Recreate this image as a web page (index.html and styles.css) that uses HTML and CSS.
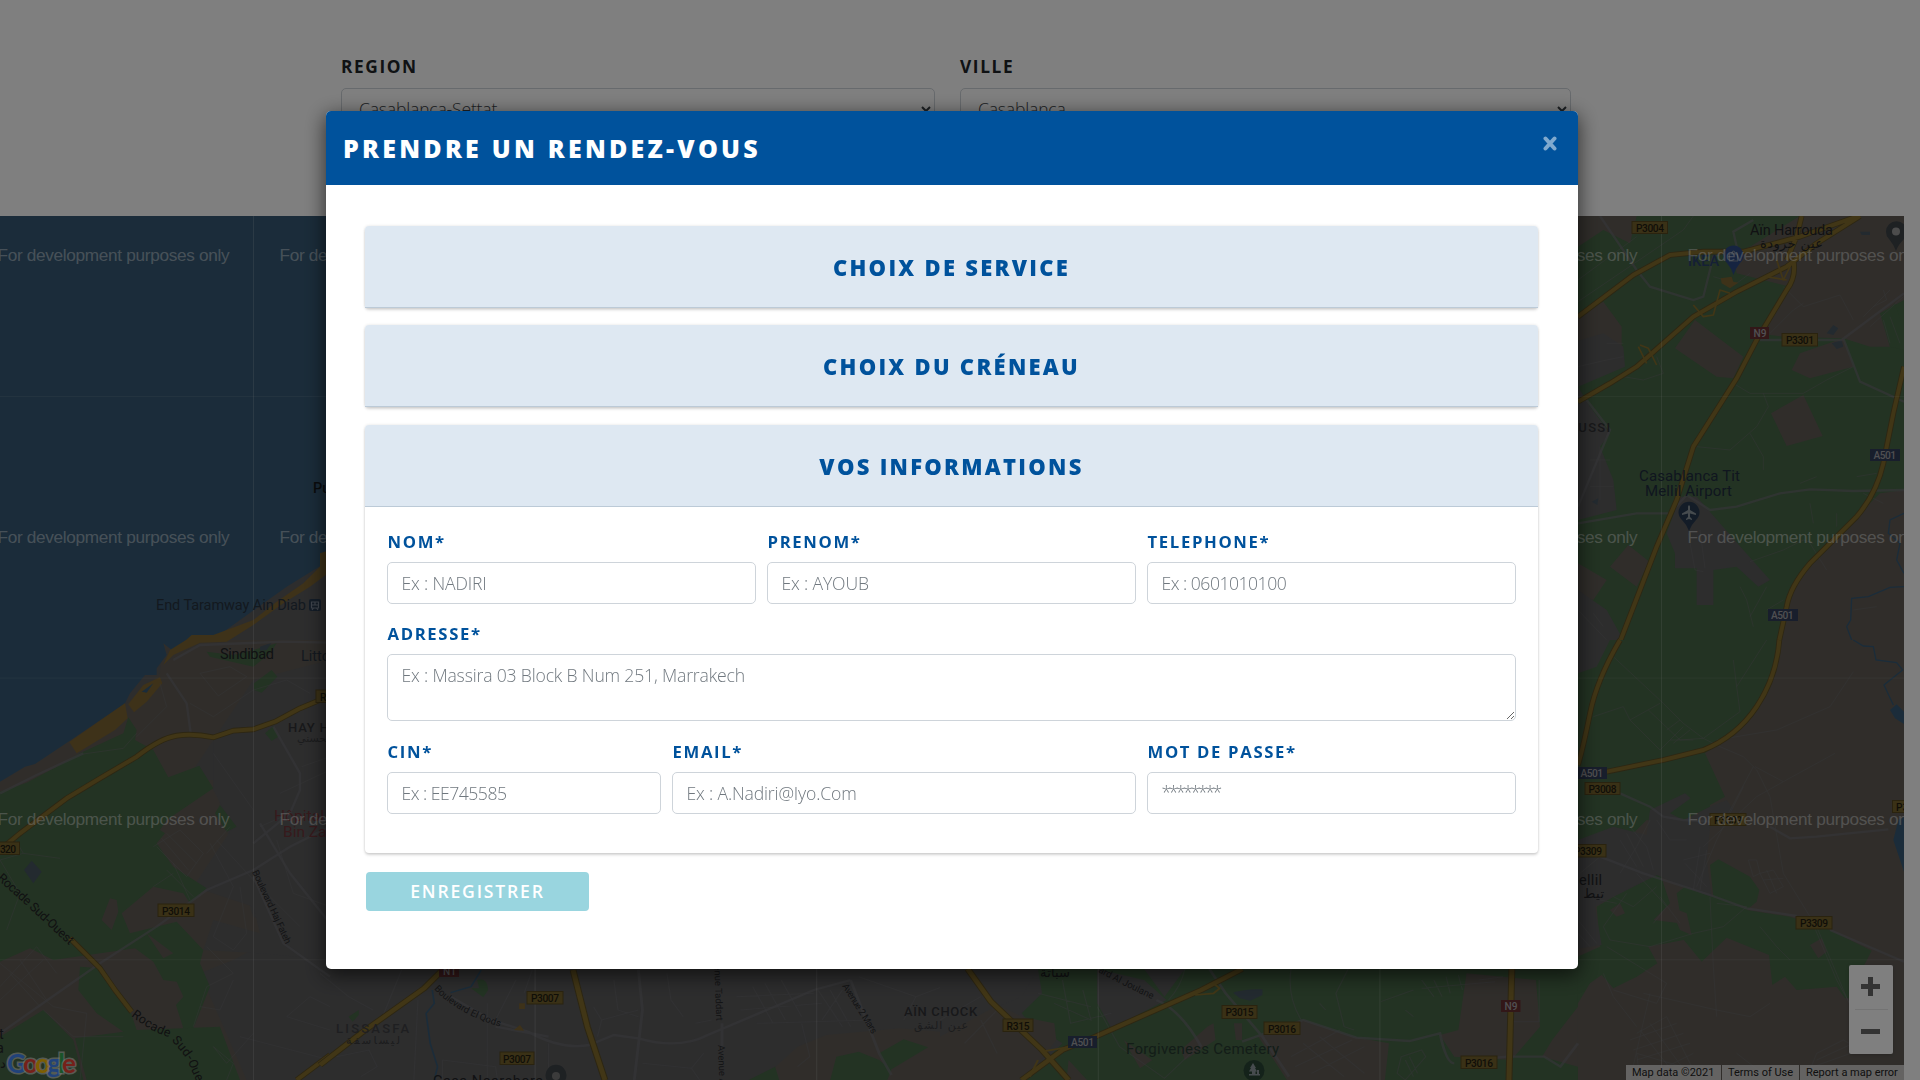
FILE: index.html
```html
<!DOCTYPE html>
<html lang="fr">
<head>
<meta charset="utf-8">
<title>Prendre un rendez-vous</title>
<link rel="stylesheet" href="styles.css">
</head>
<body>
<main class="page">
  <section class="filters">
    <div class="filter filter-region">
      <label class="filter-label" for="region">REGION</label>
      <select class="filter-select" id="region"><option>Casablanca-Settat</option></select>
    </div>
    <div class="filter filter-city">
      <label class="filter-label" for="ville">VILLE</label>
      <select class="filter-select" id="ville"><option>Casablanca</option></select>
    </div>
  </section>

  <section class="map">
    <svg class="map-canvas" viewBox="0 216 1904 864" width="1904" height="864">
      <defs>
        <pattern id="tiles" x="253" y="396" width="281.6" height="281.6" patternUnits="userSpaceOnUse">
          <path d="M.5 0V282" stroke="#fff" stroke-opacity=".16"/><path d="M0 .5H282" stroke="#fff" stroke-opacity=".08"/>
        </pattern>
        <path id="rocade1" d="M-3 879L28 907L70 946"/>
        <path id="rocade2" d="M131 1016Q150 1031 168 1037Q187 1056 190 1067L202 1094"/>
        <path id="qods" d="M434 989Q456 1013 498 1026"/>
        <path id="joulane" d="M1098 972Q1124 986 1154 1000"/>
      </defs>

      <rect class="town" x="0" y="216" width="1904" height="864"/>

      <!-- west: coast, fields and suburbs -->
      <g transform="translate(0 640) scale(.33333)">
        <path class="land" d="M490 0H990V90L640 300L560 420L640 420L700 640L760 830L870 870L700 960L600 1000L740 1320H0V420L200 300L380 190L480 100Z"/>
        <path class="town" d="M640 300L760 120L990 60V960L780 940L610 930L640 840L780 880L760 800L580 740L700 560L640 450Z"/>
        <path class="water" d="M0 -1320H990V-240L860 -160L650 -10L560 0L515 30L490 10L500 45L470 85V105L435 105L390 160L375 190L205 305L105 372L75 380L0 425Z"/>
        <path class="sand" d="M990 -270L960 -260V-220L910 -170L830 -115L760 -60L640 -15L575 -15L558 0L510 30L490 75L520 45L600 8L680 5L760 -45L850 -110L930 -160L990 -205Z"/>
        <path class="sand" d="M375 190L383 235L345 270L230 340L208 306ZM385 193L430 135L480 112L487 130L440 185L402 217Z"/>
        <path class="water" d="M425 155L460 130L440 158Z"/>
        <path class="park" d="M0 455L80 428L170 380L240 340L370 280L385 232L410 270L405 300L460 330L505 412L598 377L640 445L500 540L480 570L495 580L470 610L520 680L620 745L570 790L550 760L460 740L365 820L390 880L530 845L610 930L600 970L630 1040L580 1165H550L528 1095L550 1070L530 1025L490 1020L460 965L405 925L160 960L90 925L0 965Z"/>
        <path class="park" d="M240 980L300 985L390 1110L410 1170L660 1160L720 1320H260L225 1195L370 1175L290 1120L235 1050ZM0 1190L130 1110L220 1200L250 1320H0ZM620 35L700 45L760 30L830 10L810 40L760 80L630 50ZM762 130L815 90L832 110L785 158L762 150ZM795 280L820 258L835 290L815 303ZM660 495L710 560L680 575L645 520Z"/>
        <path class="land" d="M305 840L330 775L350 780L355 815L335 870ZM440 880L520 940L490 955Z"/>
        <path class="lake" d="M72 690L95 662L125 695L100 730ZM780 20L815 8L800 30L780 32Z"/>
        <path class="street wide" d="M0 1180L300 970L470 860L620 750L760 690L870 620L990 560M500 100L560 190L572 280M520 60L600 15L850 5L990 8M820 260L900 400V450L870 520L760 610M780 550L870 700L990 850M250 340L110 405L0 460M760 710L850 910L990 1010"/>
        <path class="street" d="M410 280L370 325L250 342M410 290L500 200L480 130M570 190L640 230L760 150L860 120L930 160M600 100L690 80L740 110L655 168ZM640 340L760 510V610M650 600L760 720L900 860M690 560L620 640M460 620L540 570L610 640L560 710L470 620M485 595L565 690M500 580L590 670M520 670L570 780M500 690L580 770M460 740L520 700M630 610L700 740L640 890L700 930L740 880L720 740M620 920L700 1000L620 1040L580 1160M600 1100L660 1110L700 1020M860 1130L990 1170M860 1130L930 1070L990 1100M720 1190L990 1260M780 560L870 520M830 600L880 760L990 800M840 460L990 390M905 380L990 350M0 660L70 640L40 590M70 640L180 655M20 870L60 760L0 660M0 970L160 1100L260 1120L240 1320M0 1040L110 920L170 1000M30 1000L120 1100M60 960L140 1080M0 1080L130 960M130 1110L220 1190H370M640 1220L680 1270L760 1180M640 1220L700 1270L680 1320"/>
        <path class="road-edge" d="M0 630L60 580L200 475L300 415L410 350Q480 295 530 287T640 292L700 272L760 268L825 245L900 205L960 180M210 895L300 985L345 1050L395 1115M890 1320L990 1245"/>
        <path class="road" d="M0 630L60 580L200 475L300 415L410 350Q480 295 530 287T640 292L700 272L760 268L825 245L900 205L960 180M210 895L300 985L345 1050L395 1115M890 1320L990 1245"/>
      </g>

      <!-- east, upper half -->
      <g transform="translate(1570 200) scale(.33333)">
        <path class="park" d="M0 40H1002V1325H0Z"/>
        <path class="land" d="M24 48H200L180 130L100 90L24 140ZM690 48H1002V300L930 340L960 440L900 440L820 415L640 410L560 400L660 260L500 220L490 160L540 140ZM690 460L820 415L850 500L720 535L665 510ZM375 360L520 470L490 535L440 530L315 445ZM100 305L155 380V480L24 560V340ZM603 640L700 585L758 708L650 738ZM120 1100L175 1035L238 1085L200 1160ZM24 1090L110 1140L70 1200L24 1190ZM1002 870L930 880L800 1010L700 1110L650 1220L625 1320H1002Z"/>
        <path class="town" d="M0 430L100 400L160 440L165 500L24 560L60 620L120 700L90 740L130 840L140 930L24 960L0 960ZM330 890H380L520 1050L600 1140L565 1160L500 1100L430 1110V1215H380V1105H315V1060L290 1000ZM24 1170L110 1230L160 1320H24Z"/>
        <path class="park" d="M935 345L975 310L1002 390V450L960 440Z"/>
        <path class="lake" d="M770 400L790 375L805 385L790 405ZM785 430L815 420L820 440L800 447ZM65 905L85 895L82 915ZM870 95H900V105H875Z"/>
        <path class="street wide" d="M24 970L200 940L300 940L350 885L420 930L500 920L630 880L720 868L850 873L1002 870M90 48L200 210L240 260L370 300L400 290L430 170L500 140L490 95L550 60M820 415L870 545L1002 605M570 420H815L1002 280M50 600L120 690L24 920"/>
        <path class="street" d="M24 305L340 90L370 48M24 240L200 110M640 260L700 320L810 285L850 360M490 550L540 580L700 580L770 540L850 500M380 740L480 750L560 680L595 620L580 580M540 700L580 770V810M430 230L500 250L540 220M600 400L670 330L700 310M160 530L220 540L280 520L260 470M110 430L160 430M24 500L110 480L160 470M860 830L920 820M690 850L740 830M720 910L730 970M800 940V980M880 880L940 910M540 1085L640 1050L700 1020L730 1030M510 1160L530 1200L550 1280M540 1250L590 1160M590 1230L640 1200M880 350L960 270M900 380L1000 290M910 320L950 300L940 270M940 360L960 430M960 350L990 430M60 780H120M60 860H130M90 740V900M70 1240L100 1280M24 1230L110 1320M850 1230L920 1220M720 1030L770 1110"/>
        <path class="stream" d="M1002 940L960 960L955 1000L990 1030L980 1080L1002 1120M1002 1160L960 1162L895 1190L845 1195L842 1260L830 1280L845 1320"/>
        <path class="road-edge" d="M24 350L190 225L300 165L400 155H520L690 110L860 50M24 605L120 550L200 500L370 350L500 275L650 200L740 130L870 48M670 180Q680 230 650 270L560 420L500 535L370 740L320 900L260 1040L150 1325M695 48L680 110L650 180M1002 500L970 640L940 790Q920 880 860 950L720 1090Q660 1160 650 1220L627 1325"/>
        <path class="road" d="M24 350L190 225L300 165L400 155H520L690 110L860 50M24 605L120 550L200 500L370 350L500 275L650 200L740 130L870 48M670 180Q680 230 650 270L560 420L500 535L370 740L320 900L260 1040L150 1325M695 48L680 110L650 180M1002 500L970 640L940 790Q920 880 860 950L720 1090Q660 1160 650 1220L627 1325"/>
        <path class="road thin" d="M370 315L400 350L430 345L450 270L480 280M205 440L230 490M210 435L235 445L260 495M620 180L640 240L670 180M590 230L650 240"/>
        <path class="sand" d="M452 235L485 230L490 245L505 248L480 265L455 250Z"/>
        <path class="street" d="M355 1000L375 1110L400 1115M390 990L405 1105"/>
      </g>

      <!-- east, lower half -->
      <g transform="translate(1570 640) scale(.33333)">
        <path class="land" d="M0 0H1002V1320H0Z"/>
        <path class="park" d="M0 0H630L600 130L520 250L405 340L465 470L420 495V540L300 545L230 540L190 580L130 570L24 600H0ZM420 675L445 658L540 710L568 750L560 785L530 810L660 830L780 870L905 932L880 980V1075H825L800 1040L680 1050L645 1010L607 1035L597 945L470 893L395 965L325 880L335 850L320 760L345 740L430 770ZM130 770L270 700L300 790L250 840L330 850L340 900L235 920L262 970L200 1010L130 1045L95 1005L60 1030L24 1090L0 1115V960L90 920L80 800Z"/>
        <path class="town" d="M24 600L130 560L230 585L240 510L345 460L362 475L300 520L340 540L420 500L470 480L490 510L420 560L410 660L425 770L340 740L260 705L130 770L75 800L95 915L0 930V650ZM24 0H120L80 80L24 100Z"/>
        <path class="land" d="M720 915L755 895L770 935L745 955ZM120 810L150 790L165 820L140 830ZM300 800L350 820L365 885L330 870Z"/>
        <path class="water" d="M960 210L980 193L1002 215V252L975 235ZM985 540L1002 530V695L970 600Z"/>
        <path class="stream" d="M850 0L880 18L910 20L918 60L980 68L998 90L942 135L970 195"/>
        <path class="street wide" d="M150 460L240 500L280 530L340 540L420 545M90 650L220 700L420 765L530 805L680 828M780 870L1002 965M600 560L660 595L740 590L955 568"/>
        <path class="street" d="M130 50L280 190L340 250L400 295L450 320L520 350L560 390L600 470L640 700L720 830L800 1020L850 1110M70 230L160 200L180 240L270 190M180 240L270 330L340 260M235 210L330 300L400 295L510 215L500 140L590 0M490 60L500 140M290 270L330 240M300 300L370 300M310 310L360 270M440 300L620 270L780 200L850 95M555 380L640 425L795 340M640 425L560 470L400 620M520 440L440 600L380 740M550 380L470 530M420 770L430 980L440 1130M240 540L200 620L150 700M170 580L220 680M150 600L200 680M260 540L300 600H350M180 560L230 620L250 690M340 660L420 640M345 670L410 740M390 620L370 750M410 630L390 750M535 660H560L570 700L550 710ZM570 700L610 690L640 740L600 760ZM590 690L620 760M580 720L640 715M440 790L530 800L460 860L370 880L240 920L120 900L100 860L170 760M130 770L190 800L260 740M200 700L290 800L250 850M270 770L330 850M90 780L140 790M110 920L290 1030L260 1090L130 1050M220 1060L440 1110L540 1130L600 1090M570 860L620 920L660 960M740 860L850 1120M240 1060L180 1320M100 1000L130 1070L200 1160M200 1180L290 1130L370 1290L200 1240L210 1320M210 1170L320 1310M240 1150L350 1300M180 1200L320 1150M190 1230L340 1180M200 1260L360 1210M230 1310L370 1240M720 1290L740 1240L820 1200L890 1240M740 1260L850 1210M730 1280L870 1230M500 1240L590 1310M24 840L80 910M24 880L60 920M30 700L90 650"/>
        <path class="road-edge" d="M150 0Q80 120 60 220T24 375M628 0Q620 110 560 200T400 330L280 360L110 395"/>
        <path class="road" d="M150 0Q80 120 60 220T24 375M628 0Q620 110 560 200T400 330L280 360L110 395"/>
      </g>

      <!-- south, centre-left -->
      <g transform="translate(320 960) scale(.40816 .33333)">
        <path class="land" d="M1080 360L1170 260L1240 225L1420 205L1568 220V360Z"/>
        <path class="park" d="M1050 360L1115 320L1125 360ZM1250 360L1265 290L1320 275L1370 300L1400 330L1390 360ZM1370 280L1430 238L1490 262L1390 335ZM70 170L95 150V165L80 185ZM385 60Q410 50 412 90L400 112L370 85H390Z"/>
        <path class="stream" d="M395 30L370 80L320 98M275 90L280 130L260 160L270 250L288 320L280 360"/>
        <path class="street wide" d="M320 110L420 180L510 215Q590 270 660 255L720 225L780 235Q880 270 950 225L1210 90L1300 60M780 30L790 150L770 360M430 200L560 230M985 190V260M1300 60L1370 280L1400 345"/>
        <path class="street" d="M200 30L150 180M240 120L230 360M300 300L430 320L435 360M300 360V300M410 130V360M520 30L500 100M430 180L480 60M560 250V360M670 140L690 180L680 230M690 180L780 150M720 60L730 150L780 170M850 40L860 120L890 170M920 190L960 180M1060 80L1110 190M1090 70L1140 180M1130 60L1180 170M1020 110L1210 100M1030 150L1230 130M1070 190L1350 180M1220 90L1280 200M1250 90L1300 200M1280 90L1230 180M1180 190L1200 290L1170 320M1320 50L1460 110L1568 60M1460 110L1430 180M790 310L910 325L940 280M910 325L930 360M40 290L120 270L140 320L100 350M0 40L70 110L130 150"/>
        <path class="road-edge" d="M0 315L100 220L255 85L300 30M620 30L655 200L698 360"/>
        <path class="road" d="M0 315L100 220L255 85L300 30M620 30L655 200L698 360"/>
        <path class="sand" d="M488 130H502V147H488ZM475 210L490 195L500 212Z"/>
      </g>

      <!-- south, centre-right -->
      <g transform="translate(940 960) scale(.40816 .33333)">
        <path class="park" d="M210 360L300 250L220 190L200 160L250 100L240 27H1563V360Z"/>
        <path class="land" d="M0 210L120 120L200 170L280 190L285 240L210 360H0ZM780 230L890 180L1010 230L1100 250L1090 360H850ZM1290 40L1460 60L1470 200L1400 300L1260 290L1225 225L1270 210ZM1500 240L1563 140V320L1475 290ZM315 300L360 360H310ZM655 200L670 190L675 240L600 300L590 270ZM720 190H740V240H725ZM450 240L520 300L490 325Z"/>
        <path class="town" d="M0 27H240L200 110L120 150L0 230ZM385 27L500 60L555 120L420 205L385 130ZM500 27H600L550 110Z"/>
        <path class="lake" d="M718 98Q750 85 790 88V105L760 122L735 115Z"/>
        <path class="street wide" d="M660 27L700 100L790 230L855 350M740 245L890 180L1020 233L1150 243L1225 220Q1240 310 1260 310M1300 300L1390 290H1480L1520 320L1563 250M530 120Q590 150 640 260"/>
        <path class="street" d="M385 140L440 260L550 355L640 250M560 120Q590 80 600 27M860 27Q850 110 885 180M1000 27L970 100L990 200L1015 210M930 230L1040 340M890 250L990 350M860 290L980 210M870 320L1010 240M910 340L1040 260M1130 290L1180 270L1190 290L1140 360L1120 340ZM1140 300L1160 350M1150 290L1170 340M1180 60L1210 110M1210 60L1230 110M1240 50L1250 100M1270 45L1280 90M1180 85L1360 65M1080 125L1160 90M930 130L945 150M1140 150L1160 170M300 60L320 190L420 160M280 130L370 180L350 90M240 100L370 140M1320 60L1380 50M1400 185H1468V60M0 180L100 110M60 250L140 150M140 280L100 180"/>
        <path class="road-edge" d="M68 27L125 125L250 270L315 360M740 27L640 90L380 230L300 270L200 360M1401 27L1394 360"/>
        <path class="road" d="M68 27L125 125L250 270L315 360M740 27L640 90L380 230L300 270L200 360M1401 27L1394 360"/>
        <path class="road thin" d="M625 105L670 100L685 85L670 70M250 275L310 262M240 300L220 350"/>
      </g>

      <rect x="0" y="216" width="1904" height="864" fill="url(#tiles)"/>

      <g class="badges">
        <g class="badge-p">
          <rect x="-10" y="842" width="29.500" height="12.500"/><text x="0" y="852.500" textLength="16">320</text>
          <rect x="158" y="904" width="36" height="12.500"/><text x="162" y="914.500" textLength="28">P3014</text>
          <rect x="316" y="690" width="36" height="12.500"/><text x="320" y="700.500">R320</text>
          <rect x="527" y="991.500" width="36" height="12.500"/><text x="531" y="1002" textLength="28">P3007</text>
          <rect x="500" y="1052" width="34" height="12.500"/><text x="503" y="1062.500" textLength="28">P3007</text>
          <rect x="1003" y="1019" width="30" height="12.500"/><text x="1006.500" y="1029.500" textLength="23">R315</text>
          <rect x="1222" y="1005.500" width="35" height="13"/><text x="1225.500" y="1016" textLength="28">P3015</text>
          <rect x="1264" y="1022" width="36" height="12.500"/><text x="1268" y="1032.500" textLength="28">P3016</text>
          <rect x="1461" y="1056" width="36" height="12.500"/><text x="1465" y="1066.500" textLength="28">P3016</text>
          <rect x="1632" y="221.500" width="35.500" height="12"/><text x="1636" y="231.500" textLength="28">P3004</text>
          <rect x="1782" y="333.500" width="35.500" height="12.500"/><text x="1786" y="344" textLength="28">P3301</text>
          <rect x="1585" y="782.500" width="35" height="12"/><text x="1588.500" y="792.500" textLength="28">P3008</text>
          <rect x="1710" y="813.500" width="36" height="12"/><text x="1714" y="823.500" textLength="28">P3309</text>
          <rect x="1892.500" y="800.500" width="36" height="12"/><text x="1896" y="810.500">P3309</text>
          <rect x="1570" y="844.500" width="36" height="12.500"/><text x="1574" y="855" textLength="28">P3309</text>
          <rect x="1796" y="916.500" width="36" height="12.500"/><text x="1800" y="927" textLength="28">P3309</text>
        </g>
        <g class="badge-n">
          <rect x="439" y="964" width="20" height="13"/><text x="443" y="974.500">N1</text>
          <rect x="1501" y="1000" width="19.500" height="12"/><text x="1504.500" y="1010">N9</text>
          <rect x="1750" y="327" width="19" height="12"/><text x="1753.500" y="337">N9</text>
        </g>
        <g class="badge-a">
          <rect x="1068" y="1036" width="29" height="12"/><text x="1071" y="1046" textLength="23">A501</text>
          <rect x="1870" y="449" width="30" height="12"/><text x="1873.500" y="459" textLength="22.500">A501</text>
          <rect x="1768" y="609" width="30" height="12"/><text x="1771" y="619" textLength="22.500">A501</text>
          <rect x="1577" y="767" width="30" height="12"/><text x="1580.500" y="777" textLength="22.500">A501</text>
        </g>
      </g>

      <g class="pins">
        <path class="pin-navy" d="M1689 531Q1687 525 1682 520A10.500 10.500 0 1 1 1696 520Q1691 525 1689 531Z"/>
        <path class="pin-glyph" d="M1688 506.500Q1689 504 1690 506.500V510L1696 513.500V515L1690 513.500V517L1692 519V520L1689 519L1686 520V519L1688 517V513.500L1682 515V513.500L1688 510Z"/>
        <path class="pin-blue" d="M1733.500 275Q1732 269 1727 263A10 10 0 1 1 1740 263Q1735 269 1733.500 275Z"/>
        <path class="pin-line" d="M1729.500 254H1737.500V261H1729.500ZM1731.500 254Q1733.500 248 1735.500 254"/>
        <path class="pin-grey" d="M1896 251Q1894 245 1889 239A10.500 10.500 0 1 1 1904 239Q1898 245 1896 251Z"/>
        <circle cx="1896" cy="231.500" r="4" fill="#999"/>
        <path class="pin-grey" d="M556 1094Q554 1088 549 1083A10.500 10.500 0 1 1 563 1083Z"/>
        <circle cx="556" cy="1076" r="4" fill="#777"/>
        <circle class="pin-forest" cx="1254" cy="1070.500" r="10.500"/>
        <path class="pin-glyph" d="M1253 1063L1256 1068H1255L1257 1071.500H1255.500V1074H1257V1070H1259V1074H1260V1075.500H1249V1074H1252V1071.500H1249L1251 1068H1250Z"/>
        <rect class="pin-navy" x="309" y="599" width="12" height="12" rx="2"/>
        <path class="pin-line" d="M311.500 602H318.500V608H311.500ZM311.500 605H318.500M315 602V605M312 610L313.500 608M318 610L316.500 608"/>
      </g>

      <g class="labels">
        <text class="transit" x="156" y="610" textLength="150">End Taramway Ain Diab</text>
        <text x="313" y="493" class="strong">Pullman</text>
        <text x="220" y="659" textLength="54">Sindibad</text>
        <text class="transit" x="301" y="661">Littoral</text>
        <text class="area" x="288" y="732">HAY HASSANI</text>
        <text class="arabic area-ar" x="297" y="742">الحي الحسني</text>
        <text class="hospital" x="274" y="821" textLength="50">Hôpital</text>
        <text class="hospital" x="283" y="837">Bin Zahr</text>
        <text x="-1" y="1039">t</text><text x="-4" y="1053">a</text><text class="arabic" x="0" y="1068">د</text>
        <text class="road-name big"><textPath href="#rocade1" textLength="98">Rocade Sud-Ouest</textPath></text>
        <text class="road-name big"><textPath href="#rocade2" textLength="108">Rocade Sud-Ouest</textPath></text>
        <text class="road-name" transform="translate(252 872) rotate(65)" textLength="80">Boulevard Haj Fateh</text>
        <text class="area thin-area" x="336" y="1033" textLength="74">LISSASFA</text>
        <text class="arabic area-ar" x="346" y="1044" textLength="54">ليساسفة</text>
        <text class="road-name"><textPath href="#qods">Boulevard El Qods</textPath></text>
        <text x="433" y="1086" textLength="110">Casa Nearshore</text>
        <text class="road-name" transform="translate(714 955) rotate(88)">Avenue Taddart</text>
        <text class="road-name" transform="translate(718 1045) rotate(88)">Avenue Abi</text>
        <text class="road-name" transform="translate(842 986) rotate(58)" textLength="57">Avenue 2 Mars</text>
        <text class="area" x="904" y="1016" textLength="74">AÏN CHOCK</text>
        <text class="arabic area-ar" x="914" y="1029" textLength="54">عين الشق</text>
        <text class="arabic" x="1040" y="977" textLength="30">سباتة</text>
        <text class="road-name"><textPath href="#joulane">ard Al Joulane</textPath></text>
        <text class="cemetery" x="1126" y="1054" textLength="153">Forgiveness Cemetery</text>
        <text x="1750" y="235" textLength="83">Aïn Harrouda</text>
        <text class="arabic" x="1760" y="248" textLength="63">عين حرودة</text>
        <text class="shop" x="1688" y="266" textLength="31">IKEA</text>
        <text class="area" x="1568" y="432" textLength="43">OUSSI</text>
        <text class="airport" x="1639" y="481" textLength="101">Casablanca Tit</text>
        <text class="airport" x="1645" y="496" textLength="87">Mellil Airport</text>
        <text x="1566" y="885" textLength="36">Mellil</text>
        <text class="arabic" x="1570" y="898" textLength="34">تيط م</text>
      </g>

      <g class="watermark">
        <text x="-2.500" y="261" textLength="232">For development purposes only</text><text x="279.500" y="261" textLength="232">For development purposes only</text><text x="1405.500" y="261" textLength="232">For development purposes only</text><text x="1687.500" y="261" textLength="232">For development purposes only</text>
        <text x="-2.500" y="543" textLength="232">For development purposes only</text><text x="279.500" y="543" textLength="232">For development purposes only</text><text x="1405.500" y="543" textLength="232">For development purposes only</text><text x="1687.500" y="543" textLength="232">For development purposes only</text>
        <text x="-2.500" y="824.500" textLength="232">For development purposes only</text><text x="279.500" y="824.500" textLength="232">For development purposes only</text><text x="1405.500" y="824.500" textLength="232">For development purposes only</text><text x="1687.500" y="824.500" textLength="232">For development purposes only</text>
      </g>

      <text class="google" x="7" y="1073" textLength="69"><tspan fill="#4285f4">G</tspan><tspan fill="#ea4335">o</tspan><tspan fill="#fbbc05">o</tspan><tspan fill="#4285f4">g</tspan><tspan fill="#34a853">l</tspan><tspan fill="#ea4335">e</tspan></text>
    </svg>
    <div class="zoom-box"><span class="zoom-btn plus"></span><span class="zoom-line"></span><span class="zoom-btn"></span></div>
    <div class="map-legal"><span class="legal-data">Map data ©2021</span><span class="legal-terms">Terms of Use</span><span class="legal-report">Report a map error</span></div>
  </section>
</main>

<div class="backdrop">
  <div class="modal">
    <header class="modal-header">
      <h1 class="modal-title">PRENDRE UN RENDEZ-VOUS</h1>
      <button class="close" type="button" aria-label="Fermer"><svg width="14" height="15" viewBox="0 0 14 15"><path d="M2.500 2.500L11.500 12.500M11.500 2.500L2.500 12.500" stroke="currentColor" stroke-width="4" stroke-linecap="round"/></svg></button>
    </header>
    <div class="modal-body">
      <section class="card"><h2 class="card-head">CHOIX DE SERVICE</h2></section>
      <section class="card"><h2 class="card-head">CHOIX DU CRÉNEAU</h2></section>
      <section class="card">
        <h2 class="card-head">VOS INFORMATIONS</h2>
        <form class="form">
          <div class="field w4"><label for="nom">NOM*</label><input id="nom" type="text" placeholder="Ex : NADIRI"></div>
          <div class="field w4"><label for="prenom">PRENOM*</label><input id="prenom" type="text" placeholder="Ex : AYOUB"></div>
          <div class="field w4"><label for="tel">TELEPHONE*</label><input id="tel" class="digits" type="text" placeholder="Ex : 0601010100"></div>
          <div class="field w12"><label for="adresse">ADRESSE*</label><textarea id="adresse" placeholder="Ex : Massira 03 Block B Num 251, Marrakech"></textarea></div>
          <div class="field w3"><label for="cin">CIN*</label><input id="cin" class="digits" type="text" placeholder="Ex : EE745585"></div>
          <div class="field w5"><label for="email">EMAIL*</label><input id="email" type="text" placeholder="Ex : A.Nadiri@Iyo.Com"></div>
          <div class="field w4"><label for="mdp">MOT DE PASSE*</label><input id="mdp" class="secret" type="password" placeholder="********"></div>
        </form>
      </section>
      <button class="submit" type="button">ENREGISTRER</button>
    </div>
  </div>
</div>
</body>
</html>
```

FILE: styles.css
```css
* { box-sizing: border-box; }
body { margin: 0; height: 1080px; overflow: hidden; background: #fff; font-family: "Open Sans", "Noto Sans", sans-serif; }

.page { display: flex; flex-direction: column; height: 1080px; }
.filters { display: flex; gap: 25px; height: 216px; padding: 54px 0 0 341px; }
.filter { display: flex; flex-direction: column; }
.filter-region { width: 594px; }
.filter-city { width: 611px; }
.filter-label { height: 34px; line-height: 25px; font-size: 17.3px; font-weight: 700; letter-spacing: 1.6px; color: #212529; }
.filter-select { width: 100%; height: 42px; padding: 0 13px; border: 1px solid #ced4da; border-radius: 5px; background: #fff; color: #3a4147; font: 300 17.6px "Open Sans", "Noto Sans", sans-serif; letter-spacing: -.2px; }

.map { position: relative; width: 1904px; height: 864px; overflow: hidden; }
.map-canvas { display: block; }
.town { fill: #5a5a5b; }
.land { fill: #605b55; }
.park { fill: #466646; }
.water { fill: #365974; }
.lake { fill: #46545f; }
.sand { fill: #7c6432; }
.street { fill: none; stroke: #6a6a6d; stroke-width: 3; stroke-opacity: .5; }
.wide { stroke-width: 7; stroke-opacity: .7; }
.stream { fill: none; stroke: #365974; stroke-width: 4; }
.road-edge { fill: none; stroke: #5a4d26; stroke-width: 17; stroke-linejoin: round; }
.road { fill: none; stroke: #836c2c; stroke-width: 12; stroke-linejoin: round; }
.thin { stroke-width: 5; }

.badges text { font: 500 10.2px Roboto, sans-serif; }
.badge-p rect { fill: #75622c; stroke: #55461f; }
.badge-p text { fill: #211d10; }
.badge-n rect { fill: #652f30; }
.badge-a rect { fill: #303c58; }
.badge-n text, .badge-a text { fill: #a0a0a4; }
.pin-navy { fill: #27394f; }
.pin-blue { fill: #2c4983; }
.pin-grey { fill: #3c4247; }
.pin-forest { fill: #294535; }
.pin-glyph { fill: #8c979d; }
.pin-line { fill: none; stroke: #7d8898; stroke-width: 1.2; }

.labels text { font: 400 14.5px Roboto, sans-serif; fill: #222326; }
.labels .strong { font-weight: 500; fill: #15181b; }
.labels .transit { fill: #27323f; }
.labels .area { font-size: 13px; font-weight: 500; letter-spacing: .8px; fill: #303134; }
.labels .thin-area { fill: #3e3f42; }
.labels .arabic { font: 400 13px "DejaVu Sans", sans-serif; }
.labels .area-ar { font-size: 11px; fill: #38393b; }
.labels .hospital { fill: #6e3438; font-size: 15.5px; }
.labels .road-name { font-size: 9.5px; fill: #28292b; }
.labels .big { font-size: 12.5px; fill: #222224; }
.labels .cemetery { fill: #263a30; font-size: 15px; }
.labels .shop { font-weight: 500; fill: #2a406b; }
.labels .airport { font-size: 15px; fill: #202c3f; }
.watermark text { font: 17.2px "Liberation Sans", Arial, sans-serif; fill: #fff; fill-opacity: .46; }
.google { font: 700 26px Lato, sans-serif; stroke: #fff; stroke-opacity: .55; stroke-width: 3; paint-order: stroke; }

.zoom-box { position: absolute; right: 11px; top: 749px; width: 44px; height: 89px; display: flex; flex-direction: column; align-items: center; border-radius: 2px; background: #fff; box-shadow: 0 1px 4px -1px rgba(0,0,0,.3); }
.zoom-btn { flex: 1; display: grid; place-items: center; width: 44px; padding: 0 1px 2px 0; }
.zoom-btn::before, .plus::after { content: ""; grid-area: 1 / 1; width: 19px; height: 5px; background: #666; }
.plus::after { width: 5px; height: 19px; }
.zoom-line { width: 33px; height: 1px; background: #e6e6e6; }
.map-legal { position: absolute; right: 0; bottom: 0; display: flex; height: 15px; font: 11px/15px Roboto, sans-serif; color: #222; white-space: nowrap; }
.map-legal span { background: rgba(245,245,245,.7); padding-left: 6px; }
.legal-data { width: 95px; }
.legal-terms { width: 77px; margin-left: 1px; }
.legal-report { width: 104px; margin-left: 1px; }

.backdrop { position: fixed; inset: 0; display: flex; align-items: flex-start; padding: 111px 0 0 326px; background: rgba(0,0,0,.5); }
.modal { width: 1252px; height: 858px; border-radius: 5px; background: #fff; box-shadow: 0 5px 20px 1px rgba(0,0,0,.62); }
.modal-header { display: flex; justify-content: space-between; height: 74px; padding: 20px 21px 0 17px; border-radius: 5px 5px 0 0; background: #00529c; color: #fff; }
.modal-title { margin: 0; font-size: 25px; line-height: 34px; font-weight: 800; letter-spacing: 3.25px; white-space: nowrap; }
.close { display: block; width: 14px; height: 15px; margin-top: 5px; padding: 0; border: 0; background: none; color: #80a9ce; }
.close svg { display: block; }
.modal-body { display: flex; flex-direction: column; gap: 17.6px; padding: 40.7px 40px 0 39px; }
.card { border-radius: 4px; background: #fff; box-shadow: 0 2px 3px rgba(0,0,0,.16), 0 0 3px rgba(0,0,0,.12); }
.card-head { margin: 0; height: 81.9px; border-bottom: 1px solid #bccad7; border-radius: 4px 4px 0 0; background: #dee8f2; color: #00529c; font-size: 22px; line-height: 82px; font-weight: 800; letter-spacing: 2.27px; text-align: center; white-space: nowrap; }
.form { display: grid; grid-template-columns: repeat(12, 1fr); column-gap: 11px; padding: 22px 22px 0; height: 346.5px; align-content: start; }
.field { display: flex; flex-direction: column; min-width: 0; }
.w3 { grid-column: span 3; }
.w4 { grid-column: span 4; }
.w5 { grid-column: span 5; }
.w12 { grid-column: span 12; }
.field label { height: 33px; padding-left: .5px; line-height: 25px; font-size: 16.7px; font-weight: 700; letter-spacing: 1.65px; color: #00529c; white-space: nowrap; }
.field input, .field textarea { width: 100%; height: 42px; margin: 0 0 17px; padding: 0 13.5px; border: 1px solid #ced4da; border-radius: 5px; background: #fff; font: 300 17.6px "Open Sans", "Noto Sans", sans-serif; letter-spacing: -.15px; color: #495057; }
.field .digits { letter-spacing: -.5px; }
.field .secret { padding-bottom: 2px; letter-spacing: -2.4px; }
.field textarea { display: block; height: 67px; margin-bottom: 18px; padding-top: 7px; line-height: 26px; letter-spacing: -.17px; overflow: hidden; resize: vertical; }
::placeholder { color: #70787f; opacity: 1; }
.submit { width: 223px; height: 39px; margin: 1px 0 0 1px; padding: 0; border: 0; border-radius: 4px; background: #99d5df; color: #fff; font: 600 17.6px "Open Sans", "Noto Sans", sans-serif; letter-spacing: 1.8px; }
```
